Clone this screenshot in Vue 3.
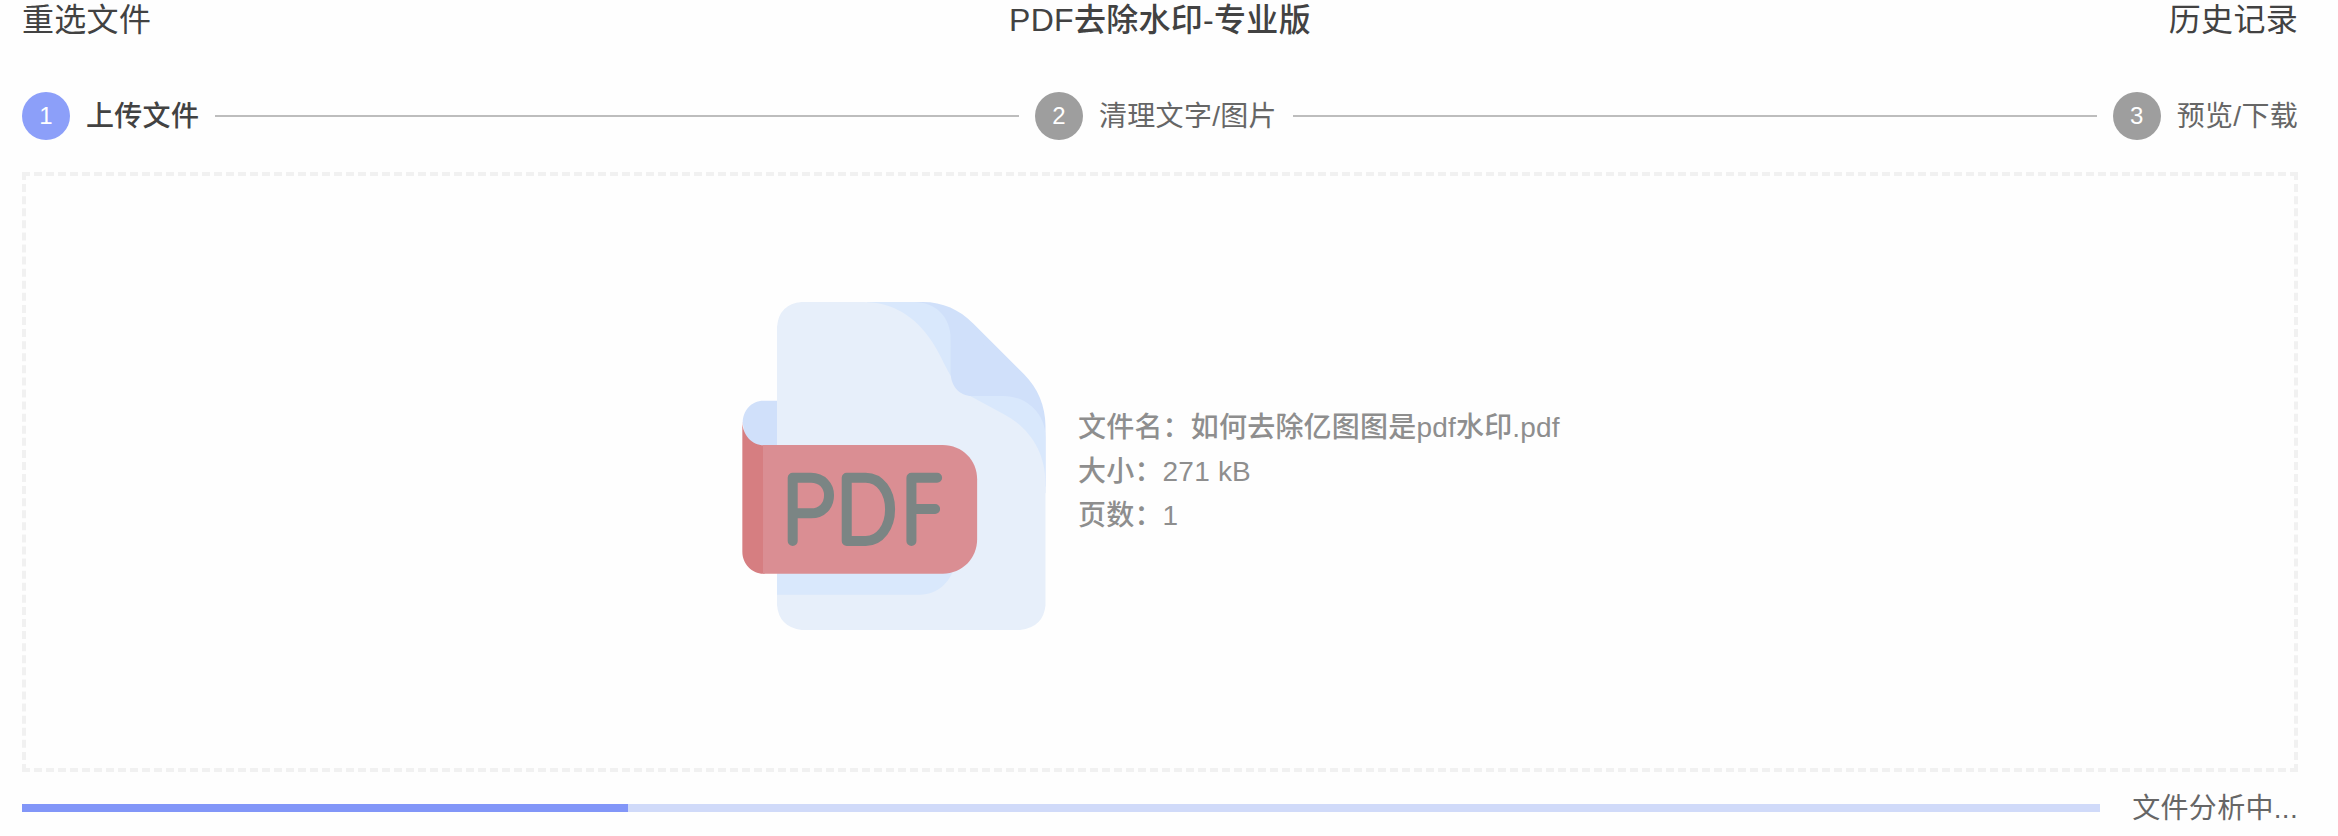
<script setup>
const steps = [
  { label: '上传文件', active: true },
  { label: '清理文字/图片', active: false },
  { label: '预览/下载', active: false },
]
const info = ['文件名：如何去除亿图图是pdf水印.pdf', '大小：271 kB', '页数：1']
const progress = 29.15
</script>

<template>
  <div class="page">
    <header class="header">
      <span class="side">重选文件</span>
      <span class="title">PDF去除水印-专业版</span>
      <span class="side right">历史记录</span>
    </header>

    <div class="stepper">
      <template v-for="(step, i) in steps" :key="step.label">
        <div v-if="i" class="connector"></div>
        <div class="step" :class="{ active: step.active }">
          <span class="num">{{ i + 1 }}</span>
          <span class="label">{{ step.label }}</span>
        </div>
      </template>
    </div>

    <main class="drop">
      <svg class="icon" viewBox="66 66 910 984" preserveAspectRatio="none">
        <path fill="#d0e0fa" d="M560 66H608C668 66 718 89 760 131L911 282C953 324 976 378 976 438V620L640 400Z" />
        <path fill="#d9e8fc" d="M440 66H580C648 66 692 112 692 178V290L735 348H850C918 348 976 400 976 470V640L560 400Z" />
        <path fill="#e7effa" d="M245 66H430C520 66 587 112 634 182C657 216 670 249 692 288C705 318 724 334 750 348L850 402C930 444 976 518 976 610V976Q970 1042 900 1050H245Q177 1042 171 976V140Q177 72 245 66Z" />
        <path fill="#d0e0fa" d="M692 170V282C693 318 718 348 755 348H850L800 200Z" />
        <path fill="#d9e8fc" d="M171 850H705C694 905 654 944 600 944H171Z" />
        <path fill="#d0e0fa" d="M171 362H130C94 362 68 392 68 428L80 497H171Z" />
        <path fill="#d67e81" d="M67 425C68 466 96 496 134 496V881H130C96 881 67 851 67 815Z" />
        <path fill="#da8e93" d="M129 495H668C726 495 771 540 771 598V778C771 836 726 881 668 881H129Z" />
        <g class="strokes">
          <path d="M218 783V593H273C306 593 327 617 327 646C327 677 306 700 273 700H218" />
          <path d="M380 593H437C480 593 510 635 510 688C510 741 480 783 437 783H380Z" />
          <path d="M651 593H574V783M574 687H645" />
        </g>
      </svg>
      <div class="info">
        <div v-for="line in info" :key="line">{{ line }}</div>
      </div>
    </main>

    <div class="progress">
      <div class="track"><div class="bar" :style="{ width: progress + '%' }"></div></div>
      <span class="status">文件分析中...</span>
    </div>
  </div>
</template>

<style>
body {
  background: #fefefe;
}
</style>

<style scoped>
.page {
  box-sizing: border-box;
  height: 836px;
  padding: 0 40px 0 22px;
  overflow: hidden;
  font-family: "Liberation Sans", "Noto Sans CJK SC", sans-serif;
  font-size: 28px;
  letter-spacing: 0.3px;
  color: #666;
  white-space: nowrap;
}
.header {
  display: grid;
  grid-template-columns: 1fr auto 1fr;
  height: 40px;
  line-height: 40px;
  font-size: 32px;
  color: #424242;
}
.title {
  font-weight: 500;
}
.right {
  text-align: right;
}
.stepper {
  display: flex;
  align-items: center;
  gap: 16px;
  height: 48px;
  margin-top: 52px;
}
.step {
  display: flex;
  align-items: center;
  gap: 16px;
}
.num {
  width: 48px;
  height: 48px;
  border-radius: 50%;
  background: #9e9e9e;
  color: #fff;
  font-size: 24px;
  line-height: 48px;
  text-align: center;
  letter-spacing: 0;
}
.label,
.status {
  line-height: 40px;
  padding-top: 2px;
}
.active .num {
  background: #8c9ff9;
}
.active .label {
  color: #424242;
  font-weight: 500;
}
.connector {
  flex: 1;
  height: 2px;
  background: #bdbdbd;
}
.drop {
  box-sizing: border-box;
  display: flex;
  align-items: center;
  height: 600px;
  margin-top: 32px;
  padding-left: 716px;
  border: 4px dashed #f1f1f1;
}
.icon {
  width: 303.5px;
  height: 328px;
  margin: 0 32.5px 12px 0;
}
.strokes {
  fill: none;
  stroke: #7b8584;
  stroke-width: 30;
  stroke-linecap: round;
  stroke-linejoin: round;
}
.info {
  line-height: 44px;
  letter-spacing: 0.2px;
  color: #8e8e8e;
  font-weight: 500;
}
.progress {
  display: flex;
  align-items: center;
  gap: 32px;
  height: 40px;
  margin-top: 16px;
}
.track {
  flex: 1;
  height: 8px;
  background: #d0daf9;
}
.bar {
  height: 100%;
  background: #8296f8;
}
</style>
